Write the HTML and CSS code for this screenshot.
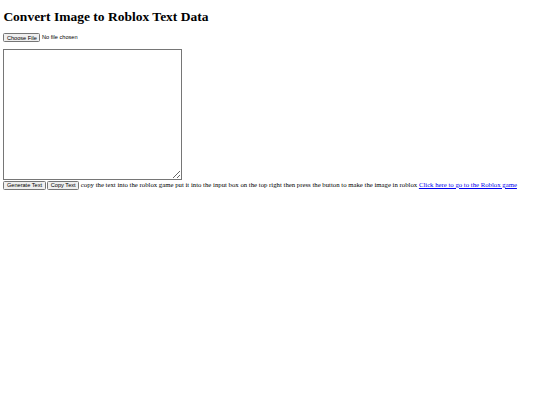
FILE: index.html
```html
<!DOCTYPE html>
<html>
  <head>
    <title>Convert Image to Roblox Text Data</title>
    <link rel="stylesheet" href="styles.css">
  </head>
  <body>
    <h1>Convert Image to Roblox Text Data</h1>
    <input type="file" id="imageInput" accept="image/*">
    <br><br>
    <textarea id="output" class="output"></textarea>
    <br>
    <button id="generate">Generate Text</button>
    <button id="copy">Copy Text</button>
    copy the text into the roblox game put it into the input box on the top right then press the button to make the image in roblox
    <a href="#">Click here to go to the Roblox game</a>
  </body>
</html>
```

FILE: styles.css
```css
body {
    font-family: "Liberation Serif", serif;
    margin: 8px;
    zoom: 0.421875;
}
h1 {
    margin: 14px 0 19px;
}
button, input {
    font-family: "Liberation Sans", sans-serif;
}
.output {
    box-sizing: border-box;
    height: 310px;
    width: 424px;
}
```
